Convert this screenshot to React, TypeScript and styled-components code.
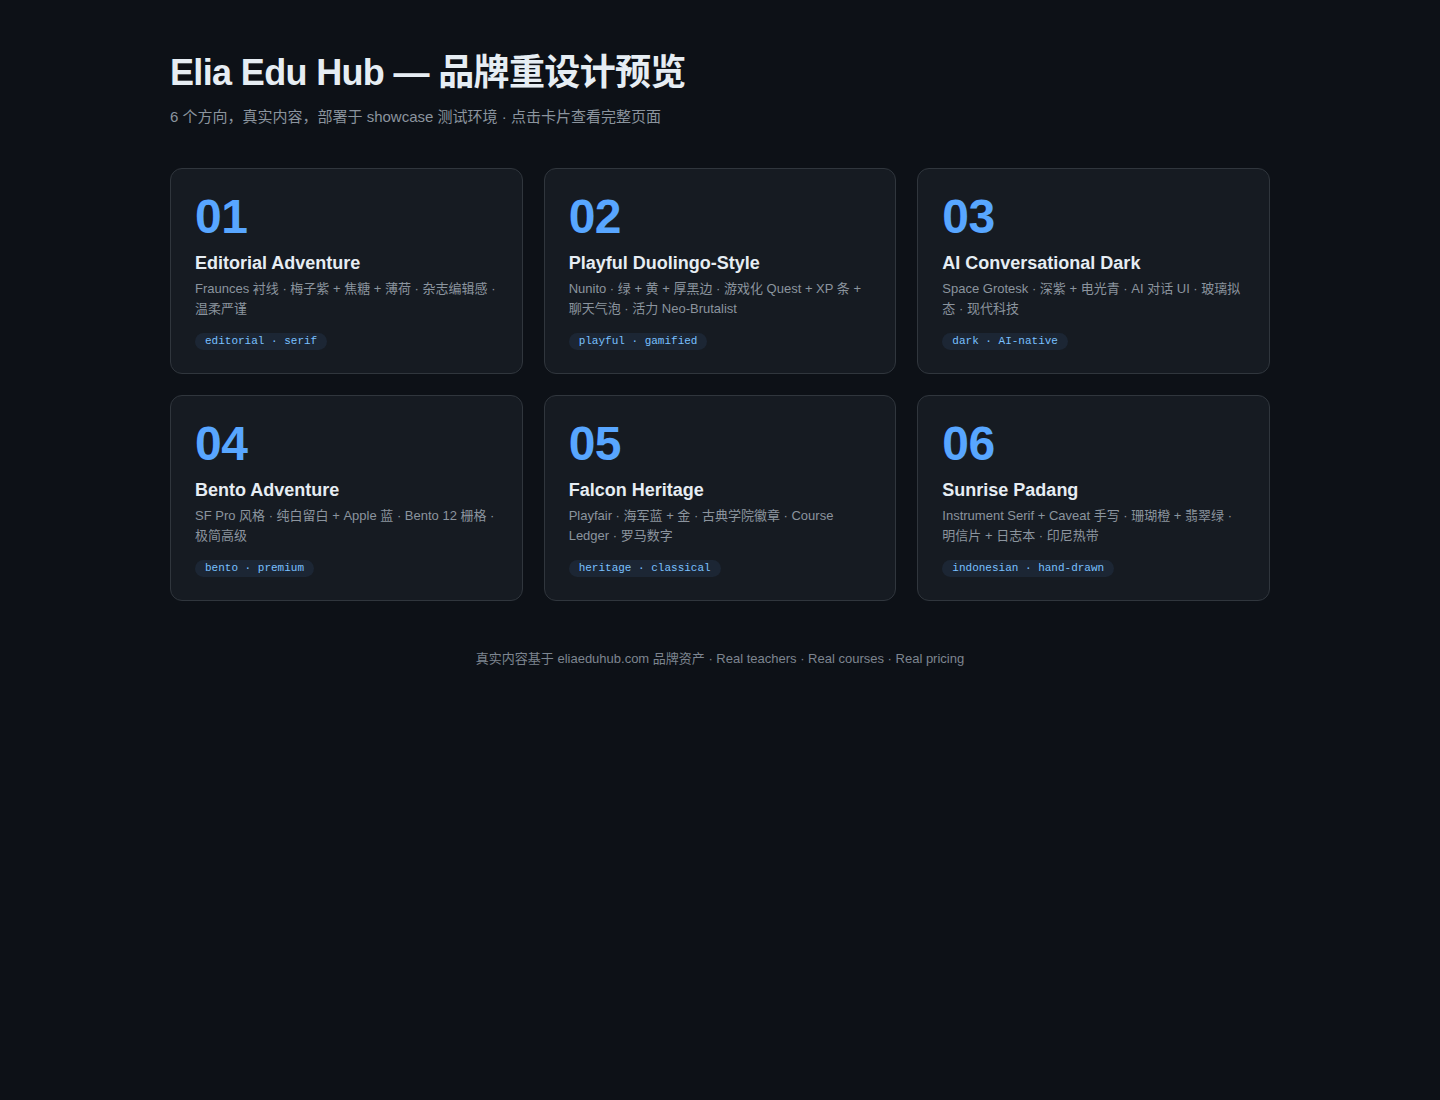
import React from "react";
import styled, { createGlobalStyle } from "styled-components";

const GlobalStyle = createGlobalStyle`
  html, body {
    margin: 0;
    padding: 0;
    background: #0d1117;
    min-height: 100%;
  }
  body {
    font-family: "Liberation Sans", "Noto Sans CJK SC", sans-serif;
    color: #e6edf3;
    -webkit-font-smoothing: antialiased;
  }
`;

const Page = styled.div`
  min-height: 100vh;
  background: #0d1117;
`;

const Container = styled.main`
  width: 1100px;
  margin: 0 auto;
  padding: 51px 0 48px;
`;

const Title = styled.h1`
  margin: 0 0 12px;
  font-size: 36px;
  line-height: 1.2;
  font-weight: 700;
  letter-spacing: -0.65px;
  color: #e6edf3;
`;

const Subtitle = styled.p`
  margin: 0;
  font-size: 15px;
  line-height: 22px;
  color: #8b949e;
`;

const Grid = styled.section`
  margin-top: 40px;
  display: grid;
  grid-template-columns: repeat(3, 1fr);
  gap: 21px;
`;

const Card = styled.a`
  display: flex;
  flex-direction: column;
  align-items: flex-start;
  padding: 24px 24px 23px;
  background: #161b22;
  border: 1px solid #30363d;
  border-radius: 12px;
  text-decoration: none;
  color: inherit;
  cursor: pointer;
`;

const Num = styled.div`
  font-size: 48px;
  line-height: 1;
  font-weight: 700;
  color: #58a6ff;
  letter-spacing: -0.5px;
  margin-bottom: 11px;
`;

const CardTitle = styled.h2`
  margin: 0 0 4px;
  font-size: 18px;
  line-height: 23px;
  font-weight: 700;
  color: #e6edf3;
`;

const Desc = styled.p`
  margin: 0;
  font-size: 13px;
  line-height: 20px;
  color: #8b949e;
`;

const Tag = styled.span`
  margin-top: 14px;
  padding: 2px 10px;
  border-radius: 999px;
  background: #1c2634;
  color: #79c0ff;
  font-family: "Liberation Mono", "DejaVu Sans Mono", monospace;
  font-size: 11px;
  line-height: 13px;
  white-space: pre;
`;

const Footer = styled.footer`
  margin-top: 48px;
  text-align: center;
  font-size: 13px;
  line-height: 20px;
  color: #7d8590;
`;

type Direction = {
  id: string;
  name: string;
  desc: string;
  tags: [string, string];
};

const directions: Direction[] = [
  {
    id: "01",
    name: "Editorial Adventure",
    desc: "Fraunces 衬线 · 梅子紫 + 焦糖 + 薄荷 · 杂志编辑感 · 温柔严谨",
    tags: ["editorial", "serif"],
  },
  {
    id: "02",
    name: "Playful Duolingo-Style",
    desc: "Nunito · 绿 + 黄 + 厚黑边 · 游戏化 Quest + XP 条 + 聊天气泡 · 活力 Neo-Brutalist",
    tags: ["playful", "gamified"],
  },
  {
    id: "03",
    name: "AI Conversational Dark",
    desc: "Space Grotesk · 深紫 + 电光青 · AI 对话 UI · 玻璃拟态 · 现代科技",
    tags: ["dark", "AI-native"],
  },
  {
    id: "04",
    name: "Bento Adventure",
    desc: "SF Pro 风格 · 纯白留白 + Apple 蓝 · Bento 12 栅格 · 极简高级",
    tags: ["bento", "premium"],
  },
  {
    id: "05",
    name: "Falcon Heritage",
    desc: "Playfair · 海军蓝 + 金 · 古典学院徽章 · Course Ledger · 罗马数字",
    tags: ["heritage", "classical"],
  },
  {
    id: "06",
    name: "Sunrise Padang",
    desc: "Instrument Serif + Caveat 手写 · 珊瑚橙 + 翡翠绿 · 明信片 + 日志本 · 印尼热带",
    tags: ["indonesian", "hand-drawn"],
  },
];

export default function App() {
  return (
    <Page>
      <GlobalStyle />
      <Container>
        <Title>Elia Edu Hub — 品牌重设计预览</Title>
        <Subtitle>
          6 个方向，真实内容，部署于 showcase 测试环境 · 点击卡片查看完整页面
        </Subtitle>

        <Grid>
          {directions.map((d) => (
            <Card key={d.id} href={`#${d.id}`}>
              <Num>{d.id}</Num>
              <CardTitle>{d.name}</CardTitle>
              <Desc>{d.desc}</Desc>
              <Tag>{`${d.tags[0]} · ${d.tags[1]}`}</Tag>
            </Card>
          ))}
        </Grid>

        <Footer>
          真实内容基于 eliaeduhub.com 品牌资产 · Real teachers · Real courses · Real pricing
        </Footer>
      </Container>
    </Page>
  );
}
